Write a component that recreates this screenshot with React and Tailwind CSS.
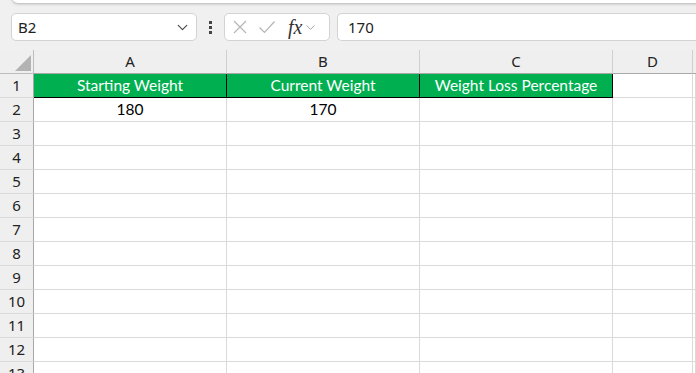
import { ChevronDown } from 'lucide-react';

const cols = ['A', 'B', 'C', 'D'];
const rows = Array.from({ length: 13 }, (_, i) => i + 1);
const font = { fontFamily: '"Noto Sans", "Open Sans", sans-serif' };
const cellFont = { fontFamily: 'Lato, "Liberation Sans", sans-serif' };

function Cell({ children, className = '' }) {
  return (
    <div className={`h-[24px] flex items-center justify-center border-r border-b border-[#dadada] text-[15.5px] ${className}`} style={cellFont}>
      {children}
    </div>
  );
}

export default function App() {
  return (
    <div className="w-[696px] h-[373px] overflow-hidden bg-[#f0f0f0] relative" style={font}>
      {/* ribbon edge */}
      <div className="absolute left-[12px] right-[-10px] top-[-10px] h-[13px] bg-white rounded-b-[6px] shadow-[0_1px_3px_rgba(0,0,0,0.25)]" />

      {/* formula bar */}
      <div className="h-[50px] flex items-start pt-[13px] pl-[11px]">
        <div className="w-[186px] h-[28px] bg-white border border-[#d3d3d3] rounded-[5px] flex items-center pl-[6px] pr-[5px]">
          <span className="text-[15px] text-[#222]">B2</span>
          <ChevronDown className="ml-auto text-[#444]" size={17} strokeWidth={1.6} />
        </div>
        <div className="w-[27px] h-[28px] flex flex-col items-center justify-center gap-[2px]">
          <span className="w-[3px] h-[3px] bg-[#444]" />
          <span className="w-[3px] h-[3px] bg-[#444]" />
          <span className="w-[3px] h-[3px] bg-[#444]" />
        </div>
        <div className="w-[106px] h-[28px] bg-white border border-[#d3d3d3] rounded-[5px] flex items-center pl-[6px]">
          <svg width="16" height="16" viewBox="0 0 16 16" className="ml-[1px]">
            <path d="M2 2 L14 14 M14 2 L2 14" stroke="#b5b5b5" strokeWidth="1.2" fill="none" />
          </svg>
          <svg width="18" height="16" viewBox="0 0 18 16" className="ml-[10px]">
            <path d="M1.5 8.5 L6.5 13.5 L16.5 2.5" stroke="#b5b5b5" strokeWidth="1.2" fill="none" />
          </svg>
          <span className="ml-[12px] text-[20px] italic text-[#333] leading-none" style={{ fontFamily: '"Liberation Serif", serif' }}>fx</span>
          <ChevronDown className="ml-[1px] text-[#999]" size={15} strokeWidth={1.4} />
        </div>
        <div className="ml-[7px] flex-1 h-[28px] bg-white border border-[#d3d3d3] border-r-0 rounded-l-[5px] flex items-center pl-[10px]">
          <span className="text-[15px] text-[#222]">170</span>
        </div>
      </div>

      {/* grid */}
      <div className="grid grid-cols-[34px_193px_193px_193px_80px_1fr]">
        <div className="h-[24px] border-r border-b border-[#bdbdbd] bg-[#efefef] relative">
          <svg width="16" height="16" viewBox="0 0 16 16" className="absolute left-[15px] top-[5px]">
            <path d="M16 0 L16 16 L0 16 Z" fill="#b3b3b3" />
          </svg>
        </div>
        {cols.map((c) => (
          <div key={c} className="h-[24px] flex items-center justify-center border-r border-b border-r-[#cfcfcf] border-b-[#a8a8a8] bg-[#efefef] text-[15px] text-[#222]">
            {c}
          </div>
        ))}
        <div className="h-[24px] border-b border-[#a8a8a8] bg-[#efefef]" />

        {rows.map((r) => (
          <div key={r} className="contents">
            <div className="h-[24px] flex items-center justify-center border-r border-b border-r-[#a8a8a8] border-b-[#dadada] bg-[#efefef] text-[15px] text-[#222]">
              {r}
            </div>
            {r === 1 ? (
              <>
                <Cell className="bg-[#00b050] text-white border-r-black border-b-black">Starting Weight</Cell>
                <Cell className="bg-[#00b050] text-white border-r-black border-b-black">Current Weight</Cell>
                <Cell className="bg-[#00b050] text-white border-r-black border-b-black">Weight Loss Percentage</Cell>
              </>
            ) : r === 2 ? (
              <>
                <Cell className="bg-white text-black">180</Cell>
                <Cell className="bg-white text-black">170</Cell>
                <Cell className="bg-white" />
              </>
            ) : (
              <>
                <Cell className="bg-white" />
                <Cell className="bg-white" />
                <Cell className="bg-white" />
              </>
            )}
            <Cell className="bg-white" />
            <Cell className="bg-white" />
          </div>
        ))}
      </div>
    </div>
  );
}
